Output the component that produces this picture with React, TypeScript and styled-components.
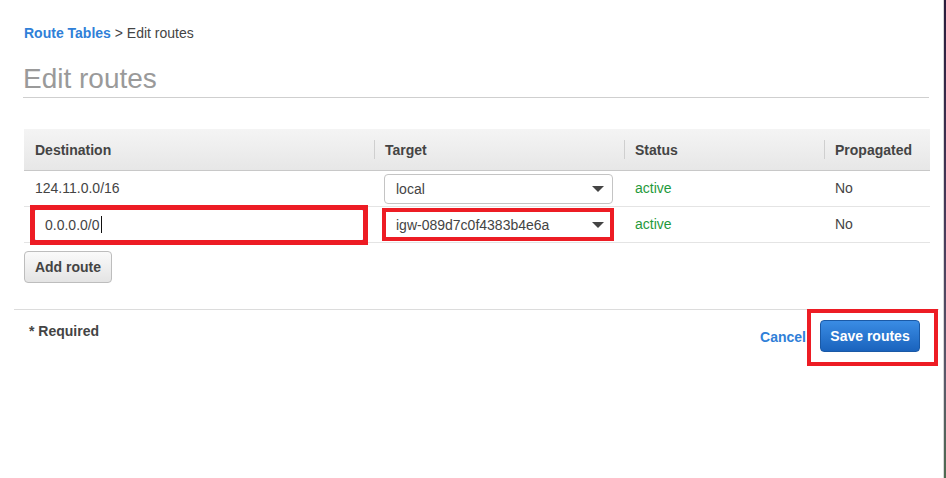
import React from "react";
import styled, { createGlobalStyle } from "styled-components";

const Global = createGlobalStyle`
  html, body { margin: 0; padding: 0; background: #fff; }
  body { font-family: "Liberation Sans", Arial, sans-serif; color: #444; font-size: 14px; }
  * { box-sizing: border-box; }
`;

const Page = styled.div`
  display: flex;
  width: 946px;
  height: 478px;
  overflow: hidden;
`;

const Main = styled.main`
  flex: 1;
  background: #fff;
  display: flex;
  flex-direction: column;
`;

const EdgeStrip = styled.div`
  width: 3px;
  background: linear-gradient(#2a1d3c, #4a3d5c 50%, #5b5a6a 80%, #4e6a50);
  border-left: 1px solid #d8d8d8;
`;

const Crumbs = styled.nav`
  padding: 25px 0 0 24px;
  font-size: 14px;
  line-height: 16px;
  color: #444;
`;

const CrumbLink = styled.a`
  color: #2f80d8;
  font-weight: bold;
  text-decoration: none;
`;

const Title = styled.h1`
  margin: 22px 14px 0 23px;
  padding: 0 0 2px;
  font-size: 28px;
  line-height: 32px;
  font-weight: normal;
  color: #9a9a9a;
  border-bottom: 1px solid #cfcfcf;
`;

const Table = styled.div`
  margin: 31px 0 0 24px;
  width: 906px;
  display: grid;
  grid-template-columns: 350px 250px 200px 106px;
`;

const HeadCell = styled.div<{ $sep?: boolean }>`
  position: relative;
  height: 42px;
  padding: 0 11px;
  display: flex;
  align-items: center;
  font-weight: bold;
  color: #444;
  background: linear-gradient(#f4f4f4, #e7e7e7);
  border-bottom: 1px solid #c8c8c8;
  &::before {
    content: "";
    display: ${(p) => (p.$sep ? "block" : "none")};
    position: absolute;
    left: 0;
    top: 11px;
    height: 19px;
    width: 1px;
    background: #cfcfcf;
  }
`;

const Cell = styled.div<{ $tone?: "ok" }>`
  height: 36px;
  padding: 0 11px 1px 11px;
  display: flex;
  align-items: center;
  border-bottom: 1px solid #e4e4e4;
  color: ${(p) => (p.$tone === "ok" ? "#1f9a3c" : "#444")};
`;

const ControlCell = styled(Cell)`
  padding: 0 0 0 10px;
`;

const Highlight = styled.div<{ $t: number; $r: number; $b: number; $l: number; $w: number }>`
  position: relative;
  &::after {
    content: "";
    position: absolute;
    top: ${(p) => -p.$t}px;
    right: ${(p) => -p.$r}px;
    bottom: ${(p) => -p.$b}px;
    left: ${(p) => -p.$l}px;
    border: ${(p) => p.$w}px solid #ed1c24;
    pointer-events: none;
  }
`;

const TextInput = styled.div`
  width: 330px;
  height: 32px;
  border: 1px solid #6aa3e6;
  border-radius: 2px;
  background: #fff;
  padding: 0 10px;
  display: flex;
  align-items: center;
  color: #444;
`;

const Cursor = styled.span`
  display: inline-block;
  width: 1px;
  height: 17px;
  background: #111;
  margin-left: 1px;
`;

const Select = styled.div`
  width: 229px;
  height: 30px;
  border: 1px solid #c4c4c4;
  border-radius: 4px;
  background: #fff;
  padding: 0 8px 0 11px;
  display: flex;
  align-items: center;
  justify-content: space-between;
  color: #444;
`;

const Arrow = styled.span`
  width: 0;
  height: 0;
  border-left: 6px solid transparent;
  border-right: 6px solid transparent;
  border-top: 6px solid #444;
`;

const AddButton = styled.button`
  margin: 8px 0 0 24px;
  align-self: flex-start;
  width: 88px;
  height: 32px;
  font-family: inherit;
  font-size: 14px;
  font-weight: bold;
  color: #444;
  background: linear-gradient(#fafafa, #e4e4e4);
  border: 1px solid #bdbdbd;
  border-radius: 4px;
  padding: 0;
`;

const Footer = styled.footer`
  margin: 26px 4px 0 14px;
  border-top: 1px solid #dcdcdc;
  padding: 10px 19px 0 15px;
  display: flex;
  justify-content: space-between;
  align-items: flex-start;
`;

const Required = styled.div`
  margin-top: 3px;
  font-weight: bold;
  line-height: 16px;
  color: #444;
`;

const Actions = styled.div`
  display: flex;
  align-items: center;
  gap: 14px;
`;

const CancelLink = styled.a`
  color: #2f80d8;
  font-weight: bold;
  text-decoration: none;
  margin-top: 1px;
`;

const PrimaryButton = styled.button`
  width: 100px;
  height: 32px;
  font-family: inherit;
  font-size: 14px;
  font-weight: bold;
  color: #fff;
  background: linear-gradient(#3a8ce4, #1a63bd);
  border: 1px solid #1a59a6;
  border-radius: 4px;
  padding: 0;
  display: block;
`;

export default function App() {
  return (
    <>
      <Global />
      <Page>
        <Main>
          <Crumbs>
            <CrumbLink>Route Tables</CrumbLink> &gt; Edit routes
          </Crumbs>
          <Title>Edit routes</Title>
          <Table>
            <HeadCell>Destination</HeadCell>
            <HeadCell $sep>Target</HeadCell>
            <HeadCell $sep>Status</HeadCell>
            <HeadCell $sep>Propagated</HeadCell>

            <Cell>124.11.0.0/16</Cell>
            <ControlCell>
              <Select>
                <span>local</span>
                <Arrow />
              </Select>
            </ControlCell>
            <Cell $tone="ok">active</Cell>
            <Cell>No</Cell>

            <ControlCell>
              <Highlight $t={4} $r={4} $b={4} $l={4} $w={5}>
                <TextInput>
                  0.0.0.0/0<Cursor />
                </TextInput>
              </Highlight>
            </ControlCell>
            <ControlCell>
              <Highlight $t={2} $r={1} $b={1} $l={2} $w={4}>
                <Select>
                  <span>igw-089d7c0f4383b4e6a</span>
                  <Arrow />
                </Select>
              </Highlight>
            </ControlCell>
            <Cell $tone="ok">active</Cell>
            <Cell>No</Cell>
          </Table>
          <AddButton>Add route</AddButton>
          <Footer>
            <Required>* Required</Required>
            <Actions>
              <CancelLink>Cancel</CancelLink>
              <Highlight $t={11} $r={18} $b={14} $l={13} $w={4}>
                <PrimaryButton>Save routes</PrimaryButton>
              </Highlight>
            </Actions>
          </Footer>
        </Main>
        <EdgeStrip />
      </Page>
    </>
  );
}
